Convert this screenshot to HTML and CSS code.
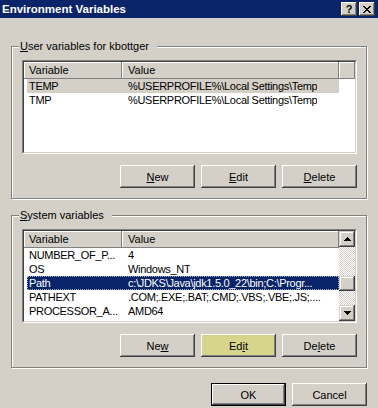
FILE: index.html
```html
<!DOCTYPE html>
<html lang="en">
<head>
    <meta charset="UTF-8">
    <title>Environment Variables</title>
    <link rel="stylesheet" href="styles.css">
</head>
<body>
    <div class="dialog">
        <div class="titlebar">
            <span class="title">Environment Variables</span>
            <div class="caption-buttons">
                <span class="cap-btn help">?</span>
                <span class="cap-btn close">
                    <svg width="8" height="7" viewBox="0 0 8 7" shape-rendering="crispEdges">
                        <path d="M0 0h2v1h-2z M6 0h2v1h-2z M1 1h2v1h-2z M5 1h2v1h-2z M2 2h4v1h-4z M3 3h2v1h-2z M2 4h4v1h-4z M1 5h2v1h-2z M5 5h2v1h-2z M0 6h2v1h-2z M6 6h2v1h-2z" fill="#000"/>
                    </svg>
                </span>
            </div>
        </div>

        <div class="content">
            <fieldset class="group">
                <legend><u>U</u>ser variables for kbottger</legend>
                <div class="listview">
                    <div class="lv-inner">
                        <div class="lv-main">
                            <div class="lv-header">
                                <div class="hd hd-var">Variable</div>
                                <div class="hd hd-val">Value</div>
                                <div class="hd hd-fill"></div>
                            </div>
                            <div class="lv-row sel-inactive"><span class="c-var">TEMP</span><span class="c-val">%USERPROFILE%\Local Settings\Temp</span></div>
                            <div class="lv-row"><span class="c-var">TMP</span><span class="c-val">%USERPROFILE%\Local Settings\Temp</span></div>
                        </div>
                    </div>
                </div>
                <div class="btn-row">
                    <button class="btn"><u>N</u>ew</button>
                    <button class="btn"><u>E</u>dit</button>
                    <button class="btn"><u>D</u>elete</button>
                </div>
            </fieldset>

            <fieldset class="group group-system">
                <legend><u>S</u>ystem variables</legend>
                <div class="listview">
                    <div class="lv-inner">
                        <div class="lv-main">
                            <div class="lv-header">
                                <div class="hd hd-var">Variable</div>
                                <div class="hd hd-val">Value</div>
                                <div class="hd hd-fill"></div>
                            </div>
                            <div class="lv-row"><span class="c-var">NUMBER_OF_P...</span><span class="c-val">4</span></div>
                            <div class="lv-row"><span class="c-var">OS</span><span class="c-val">Windows_NT</span></div>
                            <div class="lv-row sel-active"><span class="c-var">Path</span><span class="c-val">c:\JDKS\Java\jdk1.5.0_22\bin;C:\Progr...</span></div>
                            <div class="lv-row"><span class="c-var">PATHEXT</span><span class="c-val">.COM;.EXE;.BAT;.CMD;.VBS;.VBE;.JS;....</span></div>
                            <div class="lv-row"><span class="c-var">PROCESSOR_A...</span><span class="c-val">AMD64</span></div>
                        </div>
                        <div class="scrollbar">
                            <div class="sb-btn">
                                <svg width="7" height="4" viewBox="0 0 7 4" shape-rendering="crispEdges">
                                    <path d="M3 0h1v1h-1z M2 1h3v1h-3z M1 2h5v1h-5z M0 3h7v1h-7z" fill="#000"/>
                                </svg>
                            </div>
                            <div class="sb-track">
                                <div class="sb-thumb"></div>
                            </div>
                            <div class="sb-btn">
                                <svg width="7" height="4" viewBox="0 0 7 4" shape-rendering="crispEdges">
                                    <path d="M0 0h7v1h-7z M1 1h5v1h-5z M2 2h3v1h-3z M3 3h1v1h-1z" fill="#000"/>
                                </svg>
                            </div>
                        </div>
                    </div>
                </div>
                <div class="btn-row">
                    <button class="btn">Ne<u>w</u></button>
                    <button class="btn btn-hot">Ed<u>i</u>t</button>
                    <button class="btn">De<u>l</u>ete</button>
                </div>
            </fieldset>

            <div class="dialog-buttons">
                <button class="btn btn-default">OK</button>
                <button class="btn">Cancel</button>
            </div>
        </div>
    </div>
</body>
</html>
```

FILE: styles.css
```css
body {
    margin: 0;
    padding: 0;
    font-family: "Liberation Sans", Arial, sans-serif;
    font-size: 11px;
    color: #000;
    background-color: #d4d0c8;
}

.dialog {
    width: 378px;
    height: 408px;
    overflow: hidden;
    background-color: #d4d0c8;
}

/* title bar */
.titlebar {
    height: 18px;
    display: flex;
    align-items: center;
    justify-content: space-between;
    padding: 0 3px 0 2px;
    background-color: #0a246a;
}

.title {
    color: #fff;
    font-weight: bold;
    font-size: 11.5px;
    line-height: 18px;
}

.caption-buttons {
    display: flex;
    gap: 2px;
}

.cap-btn {
    width: 16px;
    height: 14px;
    display: flex;
    align-items: center;
    justify-content: center;
    background-color: #d4d0c8;
    box-shadow: inset -1px -1px #404040, inset 1px 1px #fff, inset -2px -2px #808080;
    box-sizing: border-box;
}

.help {
    font-weight: bold;
    font-size: 11px;
    line-height: 14px;
}

/* content */
.content {
    padding: 22px 11px 0 11px;
}

.group {
    margin: 0;
    padding: 7px 9px 10px 10px;
    border: 1px solid #808080;
    box-shadow: inset 1px 1px #fff, 1px 1px #fff;
    min-width: 0;
}

.group-system {
    margin-top: 10px;
}

.group legend {
    padding: 0 8px 0 1px;
    margin-left: -3px;
    line-height: 13px;
    background-color: #d4d0c8;
}

/* list view */
.listview {
    height: 94px;
    box-sizing: border-box;
    border: 1px solid;
    border-color: #808080 #fff #fff #808080;
}

.lv-inner {
    height: 100%;
    box-sizing: border-box;
    border: 1px solid;
    border-color: #404040 #d4d0c8 #d4d0c8 #404040;
    background-color: #fff;
    display: flex;
    overflow: hidden;
}

.lv-main {
    flex: 1;
    min-width: 0;
    overflow: hidden;
}

.lv-header {
    display: flex;
    height: 17px;
}

.hd {
    height: 17px;
    line-height: 16px;
    box-sizing: border-box;
    background-color: #d4d0c8;
    box-shadow: inset -1px -1px #808080, inset 1px 1px #fff;
    white-space: nowrap;
}

.hd-var {
    width: 98px;
    padding-left: 5px;
}

.hd-val {
    width: 217px;
    padding-left: 6px;
}

.hd-fill {
    flex: 1;
}

.lv-row {
    display: flex;
    width: 312px;
    height: 14px;
    line-height: 14px;
    margin-left: 3px;
    white-space: nowrap;
    letter-spacing: -0.3px;
}

.c-var {
    width: 98px;
    padding-left: 2px;
    box-sizing: border-box;
    overflow: hidden;
}

.c-val {
    padding-left: 3px;
    overflow: hidden;
}

.sel-inactive {
    background-color: #d4d0c8;
}

.sel-active {
    background-color: #0a246a;
    color: #fff;
    outline: 1px dotted #a0a8c0;
    outline-offset: -1px;
}

/* scrollbar */
.scrollbar {
    width: 16px;
    display: flex;
    flex-direction: column;
}

.sb-btn,
.sb-thumb {
    height: 16px;
    display: flex;
    align-items: center;
    justify-content: center;
    background-color: #d4d0c8;
    box-shadow: inset -1px -1px #404040, inset 1px 1px #d4d0c8, inset -2px -2px #808080, inset 2px 2px #fff;
}

.sb-track {
    flex: 1;
    background-image: conic-gradient(#fff 25%, #d4d0c8 0 50%, #fff 0 75%, #d4d0c8 0);
    background-size: 2px 2px;
}

.sb-thumb {
    height: 15px;
    margin-top: 29px;
}

/* buttons */
.btn-row,
.dialog-buttons {
    display: flex;
    justify-content: flex-end;
    gap: 6px;
}

.btn-row {
    margin-top: 11px;
}

.dialog-buttons {
    margin-top: 15px;
}

.btn {
    width: 75px;
    height: 23px;
    padding: 0;
    border: none;
    font-family: "Liberation Sans", Arial, sans-serif;
    font-size: 11px;
    color: #000;
    background-color: #d4d0c8;
    box-shadow: inset -1px -1px #404040, inset 1px 1px #fff, inset -2px -2px #808080, inset 2px 2px #d4d0c8;
}

.btn-hot {
    background-color: #d7d58b;
    box-shadow: inset -1px -1px #404040, inset 1px 1px #fff, inset -2px -2px #808080;
}

.btn-default {
    border: 1px solid #000;
    box-shadow: inset -1px -1px #404040, inset 1px 1px #fff, inset -2px -2px #808080;
}
```
